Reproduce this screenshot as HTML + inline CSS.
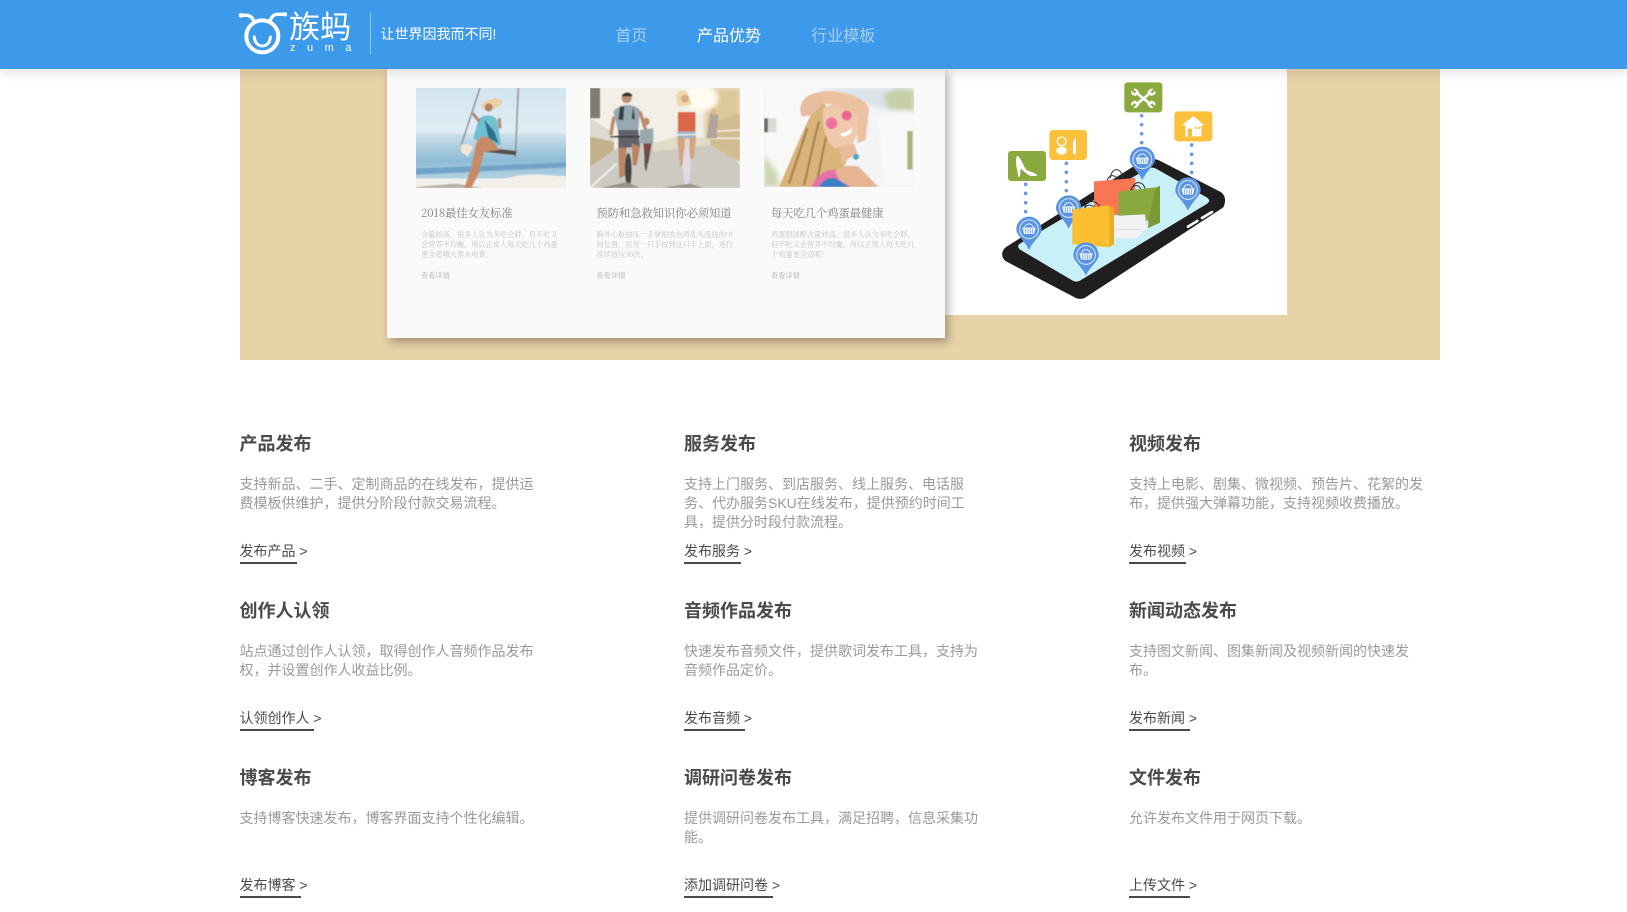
<!DOCTYPE html>
<html lang="zh">
<head>
<meta charset="utf-8">
<title>族蚂</title>
<style>
html,body{margin:0;padding:0;background:#fff;}
body{position:relative;width:1627px;height:908px;overflow:hidden;font-family:"Liberation Sans","Noto Sans CJK SC",sans-serif;}
.abs{position:absolute;}
#hd{position:absolute;left:0;top:0;width:1627px;height:69px;background:#3d9aea;box-shadow:0 2px 12px rgba(0,0,0,.14);z-index:5;}
.nav{position:absolute;top:24.5px;font-size:16px;line-height:24px;white-space:nowrap;color:#a5cdf4;}
#bg{position:absolute;left:240px;top:69px;width:1200px;height:291px;background:#e8d3a8;}
#wp{position:absolute;left:945px;top:69px;width:342px;height:246px;background:#fff;}
#card{position:absolute;left:387px;top:69px;width:558px;height:269px;background:#fafafa;box-shadow:3px 4px 9px rgba(0,0,0,.32);}
.ph{position:absolute;top:88px;width:150px;height:100px;}
.t{position:absolute;top:205px;font:11.25px/16px "Noto Serif CJK SC","Liberation Serif",serif;color:#808080;white-space:nowrap;}
.b{position:absolute;top:229.5px;font:7.2px/10px "Noto Serif CJK SC","Liberation Serif",serif;color:#c2c2c2;white-space:nowrap;}
.m{position:absolute;top:271px;font:7.2px/10px "Noto Serif CJK SC","Liberation Serif",serif;color:#b0b0b0;white-space:nowrap;}
.it{position:absolute;width:330px;height:150px;}
.it h3{position:absolute;left:-0.5px;top:0.7px;margin:0;font-size:18px;line-height:30px;font-weight:700;color:#4a4a4a;white-space:nowrap;}
.it p{position:absolute;left:-0.5px;top:46.75px;margin:0;font-size:14px;line-height:19.3px;color:#999;white-space:nowrap;}
.it a{position:absolute;left:-0.5px;top:113px;font-size:14px;line-height:20px;color:#4a4a4a;white-space:nowrap;text-decoration:none;}
.it i{position:absolute;left:-0.5px;top:133.5px;height:2px;background:#4a4a4a;display:block;}
</style>
</head>
<body>

<div id="bg"></div>
<div id="wp"></div>

<svg class="abs" style="left:990px;top:70px;z-index:1" width="250" height="240" viewBox="0 0 750 720">
<defs>
<g id="pin">
<path d="M-38 0A38 38 0 1 1 38 0C38 18 14 32 0 62C-14 32-38 18-38 0Z" fill="#5a93e2"/>
<circle r="28" fill="none" stroke="#d9e8fb" stroke-width="3"/>
<path d="M-20-5H20L15 14H-15Z" fill="#eaf3fd"/>
<path d="M-13-5C-10-20 10-20 13-5" fill="none" stroke="#eaf3fd" stroke-width="3"/>
<path d="M-10-2V12M-3-2V12M4-2V12M11-2V12" stroke="#5a93e2" stroke-width="2"/>
</g>
</defs>
<path d="M50 530L440 283C452 276 490 262 505 270L690 365C708 375 708 395 700 412L290 680C278 690 262 688 250 680L50 575C32 565 32 542 50 530Z" fill="#211e1f"/>
<path d="M88 522L472 296C480 292 490 292 498 296L650 382C660 388 660 396 650 402L270 632C262 636 256 636 248 632L92 540C84 535 82 527 88 522Z" fill="#c9eff7"/>
<path d="M594 470L622 453M636 444L666 426" stroke="#fff" stroke-width="8" stroke-linecap="round"/>
<g fill="#6f97e4">
<circle cx="107" cy="343" r="5.5"/><circle cx="107" cy="370" r="5.5"/><circle cx="107" cy="398" r="5.5"/><circle cx="107" cy="425" r="5.5"/>
<circle cx="229" cy="280" r="5.5"/><circle cx="229" cy="307" r="5.5"/><circle cx="229" cy="335" r="5.5"/><circle cx="229" cy="362" r="5.5"/>
<circle cx="455" cy="137" r="5.5"/><circle cx="455" cy="164" r="5.5"/><circle cx="455" cy="191" r="5.5"/><circle cx="455" cy="218" r="5.5"/>
<circle cx="605" cy="225" r="5.5"/><circle cx="605" cy="253" r="5.5"/><circle cx="605" cy="280" r="5.5"/><circle cx="605" cy="307" r="5.5"/>
</g>
<rect x="54" y="243" width="114" height="90" rx="9" fill="#8aa93f"/>
<path d="M80 258C92 258 98 285 108 298C118 307 137 305 142 318H122C108 312 98 300 92 295L90 320H84C84 300 74 285 80 258Z" fill="#fff"/>
<rect x="178" y="180" width="113" height="90" rx="11" fill="#fbc13d"/>
<circle cx="215" cy="214" r="13" fill="none" stroke="#fff" stroke-width="4"/><ellipse cx="215" cy="242" rx="16" ry="12" fill="#fff"/>
<path d="M249 252V216L258 200V252Z" fill="#fff"/>
<rect x="403" y="37" width="114" height="90" rx="10" fill="#8aa93f"/>
<path d="M436 66L486 106M484 66L436 106" stroke="#fff" stroke-width="8"/>
<path d="M425 62C430 52 442 54 448 68L436 78C426 76 421 70 425 62ZM495 62C490 52 478 54 472 68L484 78C494 76 499 70 495 62ZM425 108C430 118 442 116 448 102L436 92C426 94 421 100 425 108ZM495 108C490 118 478 116 472 102L484 92C494 94 499 100 495 108Z" fill="#fff"/>
<path d="M424 56L436 68M496 56L484 68M424 114L436 102M496 114L484 102" stroke="#8aa93f" stroke-width="7"/>
<rect x="553" y="124" width="114" height="90" rx="11" fill="#fbc13d"/>
<path d="M575 166L610 138L643 166H634V199H586V166Z" fill="#fff"/>
<rect x="593" y="176" width="13" height="23" fill="#fbc13d"/><rect x="614" y="170" width="6" height="7" fill="#fbc13d"/><rect x="625" y="170" width="6" height="7" fill="#fbc13d"/>
<use href="#pin" x="594" y="360"/>
<use href="#pin" x="457" y="268"/>
<use href="#pin" x="236" y="414"/>
<use href="#pin" x="117" y="478"/>
<path d="M360 325C365 290 395 290 398 325M350 340C352 310 380 310 385 335" fill="none" stroke="#333" stroke-width="3"/>
<path d="M312 334L436 324V430L312 440Z" fill="#f97652"/>
<path d="M425 362C428 330 462 330 466 360M422 362C426 342 448 342 452 358" fill="none" stroke="#333" stroke-width="3"/>
<path d="M385 365L497 352V450L385 460Z" fill="#8aa93f"/><path d="M497 352L510 348V458L475 474V452Z" fill="#7b9936"/>
<path d="M372 438L465 433L470 475L440 505H372Z" fill="#f2f2f2"/><path d="M372 478H452" stroke="#ddd" stroke-width="3"/>
<path d="M282 422C286 385 325 388 330 416M282 422C286 400 310 400 314 418" fill="none" stroke="#333" stroke-width="3"/>
<path d="M247 418L358 406V532L247 522Z" fill="#fbc031"/><path d="M358 406L372 414V522L358 532Z" fill="#ebab22"/>
<use href="#pin" x="288" y="555"/>
</svg>

<div id="card"></div>

<svg class="ph" style="left:416px;z-index:2" viewBox="0 0 450 298" preserveAspectRatio="none">
<defs>
<linearGradient id="s1" x1="0" y1="0" x2="0" y2="1"><stop offset="0" stop-color="#d3e5f0"/><stop offset="1" stop-color="#eff5f8"/></linearGradient>
<linearGradient id="s2" x1="0" y1="0" x2="0" y2="1"><stop offset="0" stop-color="#cfe2ec"/><stop offset=".6" stop-color="#8dbbd6"/><stop offset="1" stop-color="#b5d2e2"/></linearGradient>
<filter id="bl"><feGaussianBlur stdDeviation="1.5"/></filter>
<filter id="bl2"><feGaussianBlur stdDeviation="7"/></filter>
</defs>
<rect width="450" height="298" fill="url(#s1)"/>
<rect y="135" width="450" height="135" fill="url(#s2)"/>
<path d="M0 240L450 222V236L0 258Z" fill="#6fa3c7" filter="url(#bl)"/>
<path d="M0 272C100 268 230 285 300 262C360 250 420 265 450 262V298H0Z" fill="#f3efe9" filter="url(#bl)"/>
<path d="M0 295L120 285L200 298H0Z" fill="#8d8a80" opacity=".6" filter="url(#bl)"/>
<g filter="url(#bl)">
<path d="M192 0L134 175M307 0L298 205" stroke="#8c8c88" stroke-width="4" fill="none"/>
<path d="M207 178L302 188L298 200L205 190Z" fill="#57504a"/>
<path d="M135 170C140 165 165 165 172 178L155 205L135 190Z" fill="#efe8d5"/>
<ellipse cx="228" cy="48" rx="32" ry="15" fill="#e9cfa3" transform="rotate(-15 228 48)"/>
<circle cx="218" cy="58" r="12" fill="#b57f62"/>
<path d="M188 92C208 76 235 80 245 98L255 170L210 175L172 150Z" fill="#6fc0cf"/>
<path d="M205 95L235 130L248 165L218 150Z" fill="#2f6f8f"/>
<path d="M190 100L170 75M250 90L252 120" stroke="#b57f62" stroke-width="8"/>
<path d="M178 178C185 135 215 135 240 170L250 185L205 190L185 262L165 298H145L165 240Z" fill="#c68a68"/>
</g>
</svg>

<svg class="ph" style="left:590px;z-index:2" viewBox="0 0 450 298" preserveAspectRatio="none">
<rect width="450" height="298" fill="#f3eee6"/>
<g filter="url(#bl)">
<path d="M345 0H450V130L345 160Z" fill="#dcc898" filter="url(#bl2)"/>
<ellipse cx="335" cy="30" rx="50" ry="40" fill="#fffbf0" filter="url(#bl2)"/>
<rect x="0" width="30" height="90" fill="#7d7b75"/>
<path d="M0 90L72 135V160L0 145Z" fill="#dedad0"/>
<path d="M0 145L72 160V190L0 235Z" fill="#c2b18a"/>
<path d="M0 235L72 185L120 160L400 170L450 230V298H0Z" fill="#cdcac2"/>
<path d="M360 105L450 75V220L360 170Z" fill="#d2bd92"/>
<path d="M360 130L450 125M360 150L450 150" stroke="#f4ecd8" stroke-width="5"/>
<path d="M190 165L260 145L360 150V170L190 190Z" fill="#e2dbc8"/>
<circle cx="110" cy="30" r="15" fill="#b98d6f"/><path d="M95 25C100 10 125 10 127 25Z" fill="#3c2f28"/>
<path d="M70 70C90 45 130 45 150 65L145 125L85 130Z" fill="#98a9b3"/>
<path d="M90 55L85 95H100L103 55ZM130 55L135 95L125 90Z" fill="#3b3f42"/>
<path d="M85 125H145L150 175L85 180Z" fill="#62646a"/>
<path d="M85 178L110 178L105 260L88 270ZM125 165L150 175L140 230H128Z" fill="#b98565"/>
<ellipse cx="115" cy="245" rx="10" ry="52" fill="#444"/>
<path d="M60 145L175 145" stroke="#333" stroke-width="4"/>
<path d="M72 85L62 140M150 70L170 135" stroke="#b98d6f" stroke-width="10"/>
<circle cx="168" cy="100" r="11" fill="#b98d6f"/><path d="M150 125L190 120L190 165L150 165Z" fill="#98aab0"/>
<path d="M160 165L185 165L175 225H165Z" fill="#7a4a40"/><ellipse cx="168" cy="215" rx="5" ry="32" fill="#555"/>
<path d="M258 25C265 5 290 0 295 20L305 50L265 55Z" fill="#f2d7a6"/><circle cx="285" cy="32" r="12" fill="#d8ab88"/>
<rect x="264" y="72" width="52" height="58" fill="#d8674a"/>
<path d="M262 130H316L318 150H262Z" fill="#9bb3c6"/>
<path d="M262 148L285 148L282 225L270 235ZM298 148L318 148L312 210L300 210Z" fill="#d3a27f"/>
<path d="M258 140L330 138" stroke="#eee" stroke-width="4"/>
<ellipse cx="290" cy="232" rx="12" ry="58" fill="#e2d9e4"/>
<path d="M360 75L385 80L380 150L350 150Z" fill="#b2a49c"/><circle cx="372" cy="70" r="10" fill="#dcbb94"/>
<path d="M0 298L80 225" stroke="#f0f0f0" stroke-width="6"/>
<path d="M210 298L300 285L340 298Z" fill="#97948d"/>
<path d="M30 298L110 280L150 298Z" fill="#97948d"/>
</g>
</svg>

<svg class="ph" style="left:764px;height:99px;z-index:2" viewBox="0 0 450 295" preserveAspectRatio="none">
<rect width="450" height="295" fill="#f2f4f5"/>
<g filter="url(#bl)">
<rect width="170" height="295" fill="#f8f8f7" filter="url(#bl2)"/>
<path d="M170 0H450V70L340 60Z" fill="#dde3e8" filter="url(#bl2)"/>
<path d="M360 20C390 0 430 0 450 10V70L370 60Z" fill="#c8cfa8" filter="url(#bl2)"/>
<path d="M340 80L450 70V295H360Z" fill="#f7f9fa" filter="url(#bl2)"/>
<rect x="430" y="128" width="16" height="115" fill="#aab480"/>
<rect x="0" y="90" width="12" height="42" fill="#6f6a64"/><rect x="12" y="90" width="25" height="42" fill="#dcdad6"/>
<path d="M0 200L40 250L45 295H0Z" fill="#cdd7b2" filter="url(#bl2)"/>
<path d="M170 30C130 90 100 170 45 295H215L250 210L255 130L190 60Z" fill="#d8b479"/>
<path d="M130 120C110 180 90 240 75 285M165 100C145 170 135 230 120 290M190 130C175 190 170 230 160 270" stroke="#a87b4b" stroke-width="6" fill="none"/>
<path d="M178 60C170 120 190 170 215 180L262 172L285 130L290 70L230 40Z" fill="#f0c8ac"/>
<path d="M170 10C230 5 300 25 315 60L305 155L280 165L282 85L225 52L165 45Z" fill="#ecc1a2"/>
<path d="M108 60C115 25 145 12 178 12L170 55L140 82L112 85Z" fill="#e8bd9f"/>
<circle cx="203" cy="105" r="17" fill="#ee7199"/><circle cx="248" cy="82" r="15" fill="#ea6390"/>
<path d="M228 136C242 134 254 127 264 118L262 132C250 146 232 148 228 136Z" fill="#fff"/>
<path d="M225 175L270 165L280 195L232 225Z" fill="#e8bb9c"/>
<circle cx="276" cy="205" r="9" fill="#48a8c8"/>
<path d="M142 295C160 255 190 240 225 245L265 295Z" fill="#e46faa"/>
<path d="M165 295C180 268 205 262 225 275L255 295Z" fill="#3d7fc5"/>
<path d="M214 250C225 232 260 228 285 235L343 295H262L225 275Z" fill="#e6b495"/>
</g>
</svg>

<div class="t" style="left:421px">2018最佳女友标准</div>
<div class="b" style="left:421px">含量较高，很多人认为多吃会胖，但不吃又<br>会营养不均衡。所以正常人每天吃几个鸡蛋<br>更合适哦大帮水电费。</div>
<div class="m" style="left:421px">查看详情</div>
<div class="t" style="left:596.5px">预防和急救知识你必须知道</div>
<div class="b" style="left:596.5px">胸外心脏按压一手掌根放在两乳头连线的中<br>间位置，用另一只手按到这只手上面，进行<br>连续按压30次。</div>
<div class="m" style="left:596.5px">查看详情</div>
<div class="t" style="left:771px">每天吃几个鸡蛋最健康</div>
<div class="b" style="left:771px">鸡蛋胆固醇含量较高，很多人认为多吃会胖，<br>但不吃又会营养不均衡。所以正常人每天吃几<br>个鸡蛋更合适呢?</div>
<div class="m" style="left:771px">查看详情</div>

<div id="hd">
<svg class="abs" style="left:235px;top:5px" width="60" height="60" viewBox="0 0 180 180">
<circle cx="82" cy="94" r="48" fill="none" stroke="#fff" stroke-width="12"/>
<path d="M58 96C60 132 104 132 106 96" fill="none" stroke="#fff" stroke-width="9" stroke-linecap="round"/>
<path d="M18 31H36C48 32 54 40 58 52M148 28H124C112 30 108 40 104 52" fill="none" stroke="#fff" stroke-width="10" stroke-linecap="round"/>
<circle cx="18" cy="31" r="7" fill="#fff"/><circle cx="150" cy="28" r="6.5" fill="#fff"/>
</svg>
<div class="abs" style="left:289px;top:10px;font-size:31px;line-height:36px;font-weight:400;color:#fff;white-space:nowrap">族蚂</div>
<div class="abs" style="left:290px;top:41px;font-size:11px;line-height:14px;letter-spacing:11.5px;color:#fff;white-space:nowrap">zuma</div>
<div class="abs" style="left:370px;top:13px;width:1px;height:41px;background:rgba(255,255,255,.45)"></div>
<div class="abs" style="left:380.5px;top:24px;font-size:14px;line-height:20px;color:#fff;white-space:nowrap">让世界因我而不同!</div>
<div class="nav" style="left:615.3px">首页</div>
<div class="nav" style="left:697px;color:#fff">产品优势</div>
<div class="nav" style="left:811.3px">行业模板</div>
</div>

<div class="it" style="left:240px;top:428px"><h3>产品发布</h3><p>支持新品、二手、定制商品的在线发布，提供运<br>费模板供维护，提供分阶段付款交易流程。</p><a>发布产品 &gt;</a><i style="width:57px"></i></div>
<div class="it" style="left:684.5px;top:428px"><h3>服务发布</h3><p>支持上门服务、到店服务、线上服务、电话服<br>务、代办服务SKU在线发布，提供预约时间工<br>具，提供分时段付款流程。</p><a>发布服务 &gt;</a><i style="width:57px"></i></div>
<div class="it" style="left:1129.5px;top:428px"><h3>视频发布</h3><p>支持上电影、剧集、微视频、预告片、花絮的发<br>布，提供强大弹幕功能，支持视频收费播放。</p><a>发布视频 &gt;</a><i style="width:57px"></i></div>

<div class="it" style="left:240px;top:595px"><h3>创作人认领</h3><p>站点通过创作人认领，取得创作人音频作品发布<br>权，并设置创作人收益比例。</p><a>认领创作人 &gt;</a><i style="width:74.5px"></i></div>
<div class="it" style="left:684.5px;top:595px"><h3>音频作品发布</h3><p>快速发布音频文件，提供歌词发布工具，支持为<br>音频作品定价。</p><a>发布音频 &gt;</a><i style="width:61px"></i></div>
<div class="it" style="left:1129.5px;top:595px"><h3>新闻动态发布</h3><p>支持图文新闻、图集新闻及视频新闻的快速发<br>布。</p><a>发布新闻 &gt;</a><i style="width:61px"></i></div>

<div class="it" style="left:240px;top:762px"><h3>博客发布</h3><p>支持博客快速发布，博客界面支持个性化编辑。</p><a>发布博客 &gt;</a><i style="width:61px"></i></div>
<div class="it" style="left:684.5px;top:762px"><h3>调研问卷发布</h3><p>提供调研问卷发布工具，满足招聘，信息采集功<br>能。</p><a>添加调研问卷 &gt;</a><i style="width:89px"></i></div>
<div class="it" style="left:1129.5px;top:762px"><h3>文件发布</h3><p>允许发布文件用于网页下载。</p><a>上传文件 &gt;</a><i style="width:61px"></i></div>

</body>
</html>
